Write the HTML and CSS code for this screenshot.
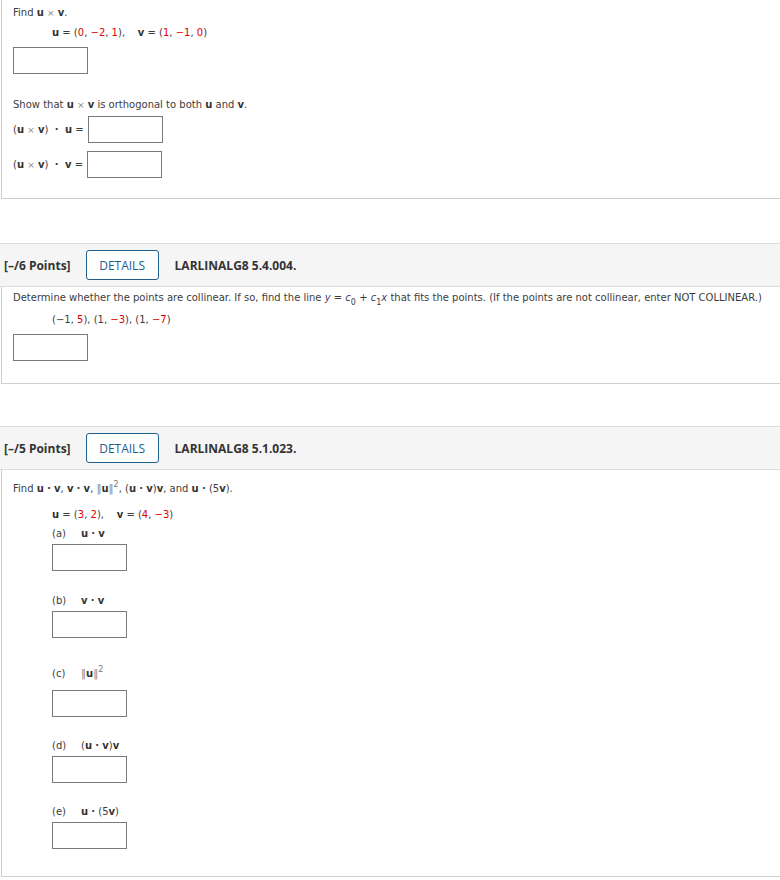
FILE: index.html
```html
<!DOCTYPE html>
<html>
<head lang="en">
    <meta charset="UTF-8">
    <title>Questions</title>
    <link rel="stylesheet" href="styles.css">
</head>
<body>
    <div class="question first">
        <div class="qbody q1">
            <p class="line l-find">Find <b>u</b> <span class="op">&times;</span> <b>v</b>.</p>
            <p class="line math m-uv"><b>u</b> = (<span class="num">0</span>, <span class="num">&minus;2</span>, <span class="num">1</span>), &nbsp;&nbsp; <b>v</b> = (<span class="num">1</span>, <span class="num">&minus;1</span>, <span class="num">0</span>)</p>
            <div class="answer a-first"></div>
            <p class="line l-show">Show that <b>u</b> <span class="op">&times;</span> <b>v</b> is orthogonal to both <b>u</b> and <b>v</b>.</p>
            <div class="row r1">
                <span class="math">(<b>u</b> <span class="op">&times;</span> <b>v</b>) &nbsp;<span class="dot">&middot;</span>&nbsp; <b>u</b> =</span>
                <div class="answer"></div>
            </div>
            <div class="row r2">
                <span class="math">(<b>u</b> <span class="op">&times;</span> <b>v</b>) &nbsp;<span class="dot">&middot;</span>&nbsp; <b>v</b> =</span>
                <div class="answer"></div>
            </div>
        </div>
    </div>

    <div class="question">
        <div class="header">
            <span class="points">[&ndash;/6 Points]</span>
            <button class="details">DETAILS</button>
            <span class="code">LARLINALG8 5.4.004.</span>
        </div>
        <div class="qbody q2">
            <p class="line">Determine whether the points are collinear. If so, find the line <i class="var">y</i> = <i class="var">c</i><sub>0</sub> + <i class="var">c</i><sub>1</sub><i class="var">x</i> that fits the points. (If the points are not collinear, enter NOT COLLINEAR.)</p>
            <p class="line math m-pts">(&minus;1, <span class="num">5</span>), (1, <span class="num">&minus;3</span>), (1, <span class="num">&minus;7</span>)</p>
            <div class="answer a-first"></div>
        </div>
    </div>

    <div class="question">
        <div class="header">
            <span class="points">[&ndash;/5 Points]</span>
            <button class="details">DETAILS</button>
            <span class="code">LARLINALG8 5.1.023.</span>
        </div>
        <div class="qbody q3">
            <p class="line l-find3">Find <b>u</b> <span class="dot">&middot;</span> <b>v</b>, <b>v</b> <span class="dot">&middot;</span> <b>v</b>, <span class="norm">&#8214;</span><b>u</b><span class="norm">&#8214;</span><sup>2</sup>, (<b>u</b> <span class="dot">&middot;</span> <b>v</b>)<b>v</b>, and <b>u</b> <span class="dot">&middot;</span> (5<b>v</b>).</p>
            <p class="line math m-uv3"><b>u</b> = (<span class="num">3</span>, <span class="num">2</span>), &nbsp;&nbsp; <b>v</b> = (<span class="num">4</span>, <span class="num">&minus;3</span>)</p>

            <p class="line part p-a"><span class="tag">(a)</span><b>u</b> <span class="dot">&middot;</span> <b>v</b></p>
            <div class="answer sub"></div>

            <p class="line part p-b"><span class="tag">(b)</span><b>v</b> <span class="dot">&middot;</span> <b>v</b></p>
            <div class="answer sub"></div>

            <p class="line part p-c"><span class="tag">(c)</span><span class="norm">&#8214;</span><b>u</b><span class="norm">&#8214;</span><sup>2</sup></p>
            <div class="answer sub s-c"></div>

            <p class="line part p-d"><span class="tag">(d)</span>(<b>u</b> <span class="dot">&middot;</span> <b>v</b>)<b>v</b></p>
            <div class="answer sub"></div>

            <p class="line part p-e"><span class="tag">(e)</span><b>u</b> <span class="dot">&middot;</span> (5<b>v</b>)</p>
            <div class="answer sub"></div>
        </div>
    </div>
</body>
</html>
```
FILE: styles.css
```css
* {
    margin: 0;
    padding: 0;
    box-sizing: border-box;
}
body {
    font-family: "DejaVu Sans", Verdana, sans-serif;
    font-size: 10px;
    color: #3c3c3c;
    background: #fff;
}
b {
    font-weight: bold;
    color: #333;
}
.line {
    line-height: 16px;
    height: 16px;
    white-space: nowrap;
}
.math {
    margin-left: 39px;
}
.num {
    color: #e00000;
}
.op {
    color: #888;
    font-size: 9px;
}
.dot {
    font-weight: bold;
}
.norm {
    color: #888;
}
sup {
    font-size: 8px;
    color: #777;
    vertical-align: 5px;
    line-height: 0;
}
sub {
    font-size: 8px;
    vertical-align: -4px;
    line-height: 0;
}
.var {
    color: #4a3a6e;
}

.question + .question {
    margin-top: 44px;
}
.question + .question + .question {
    margin-top: 42px;
}
.qbody {
    margin-left: 1px;
    border-left: 1px solid #cfcfcf;
    border-bottom: 1px solid #cfcfcf;
    padding-left: 11px;
}

.answer {
    width: 75px;
    height: 27px;
    border: 1px solid #7a7a7a;
    background: #fff;
}

/* question 1 */
.q1 {
    padding-top: 5px;
    padding-bottom: 20px;
}
.m-uv {
    margin-top: 4px;
}
.a-first {
    margin-top: 6px;
}
.l-show {
    margin-top: 23px;
}
.row {
    display: flex;
    align-items: center;
    gap: 4px;
}
.row .math {
    margin-left: 0;
}
.r1 {
    margin-top: 3px;
}
.r2 {
    margin-top: 8px;
}

/* header bar */
.header {
    display: flex;
    align-items: center;
    height: 44px;
    background: #f5f5f5;
    border-top: 1px solid #dcdcdc;
    border-bottom: 1px solid #dcdcdc;
    padding-left: 4px;
    font-family: "Open Sans", "Noto Sans", sans-serif;
    font-size: 12px;
    color: #333;
}
.points {
    font-weight: bold;
}
.details {
    margin-left: 15px;
    width: 73px;
    height: 30px;
    border: 1px solid #1f5d8c;
    border-radius: 3px;
    background: #fff;
    color: #1f5d8c;
    font-family: "Open Sans", "Noto Sans", sans-serif;
    font-size: 12px;
}
.code {
    margin-left: 16px;
    font-weight: bold;
}

/* question 2 */
.q2 {
    padding-top: 3px;
    padding-bottom: 22px;
}
.m-pts {
    margin-top: 6px;
}

/* question 3 */
.q3 {
    padding-top: 11px;
    padding-bottom: 27px;
}
.m-uv3 {
    margin-top: 10px;
}
.part {
    margin-left: 39px;
}
.tag {
    display: inline-block;
    width: 29px;
}
.p-a {
    margin-top: 3px;
}
.sub {
    margin-left: 39px;
    margin-top: 2px;
}
.p-b {
    margin-top: 22px;
}
.p-c {
    margin-top: 28px;
}
.s-c {
    margin-top: 8px;
}
.p-d {
    margin-top: 21px;
}
.p-e {
    margin-top: 21px;
}
```
